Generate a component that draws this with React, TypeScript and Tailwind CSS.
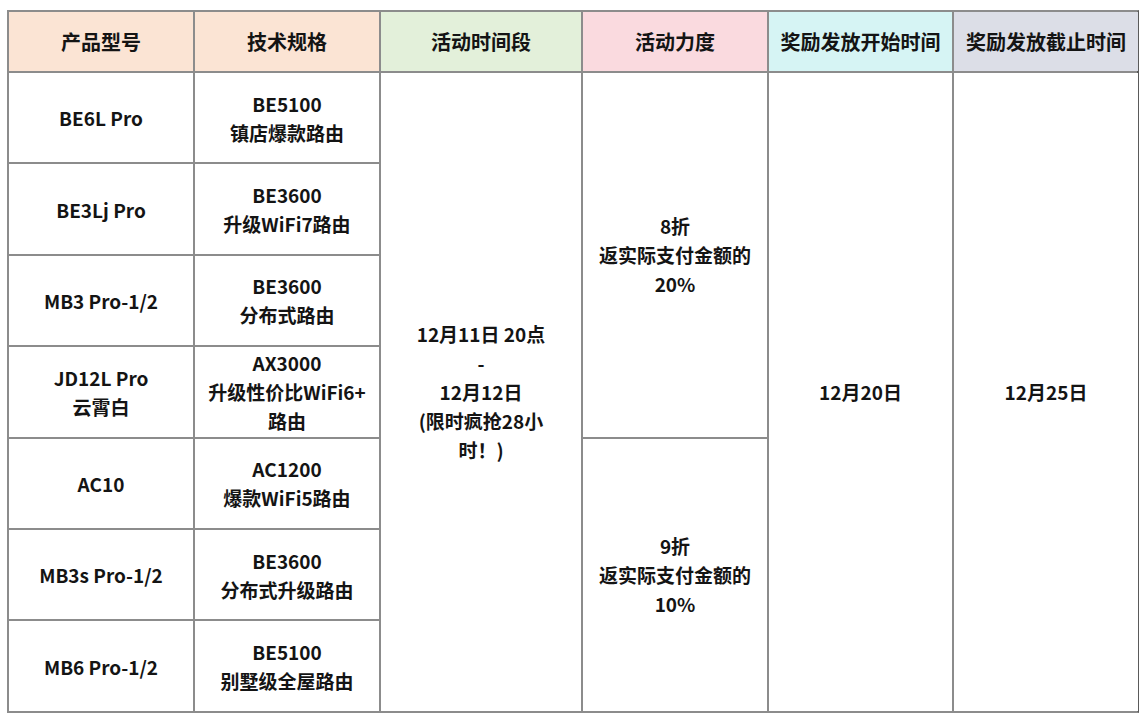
import React from 'react';

type Product = {
    model: string[];
    spec: string[];
};

const products: Product[] = [
    { model: ['BE6L Pro'], spec: ['BE5100', '镇店爆款路由'] },
    { model: ['BE3Lj Pro'], spec: ['BE3600', '升级WiFi7路由'] },
    { model: ['MB3 Pro-1/2'], spec: ['BE3600', '分布式路由'] },
    { model: ['JD12L Pro', '云霄白'], spec: ['AX3000', '升级性价比WiFi6+', '路由'] },
    { model: ['AC10'], spec: ['AC1200', '爆款WiFi5路由'] },
    { model: ['MB3s Pro-1/2'], spec: ['BE3600', '分布式升级路由'] },
    { model: ['MB6 Pro-1/2'], spec: ['BE5100', '别墅级全屋路由'] },
];

const headers = [
    { label: '产品型号', bg: 'bg-[#fbe4d4]' },
    { label: '技术规格', bg: 'bg-[#fbe4d4]' },
    { label: '活动时间段', bg: 'bg-[#e3f0da]' },
    { label: '活动力度', bg: 'bg-[#fadadf]' },
    { label: '奖励发放开始时间', bg: 'bg-[#d6f4f4]' },
    { label: '奖励发放截止时间', bg: 'bg-[#dcdee7]' },
];

const Lines = ({ lines }: { lines: string[] }) => (
    <>
        {lines.map((line, i) => (
            <span key={i} className="block">{line}</span>
        ))}
    </>
);

export default function App() {
    return (
        <div
            className="min-h-[722px] bg-white pl-[7px] pt-[10px] text-[#141414]"
            style={{ fontFamily: '"Noto Sans CJK SC", "Noto Sans", sans-serif' }}
        >
            <div className="grid w-[1132px] grid-cols-[184px_184px_200px_184px_183px_184px] grid-rows-[59px_repeat(7,89.4px)] gap-[2px] border-2 border-[#8c8c8c] border-r-[#5a5a5a] bg-[#8c8c8c] font-bold leading-[29px]">
                {headers.map((h) => (
                    <div
                        key={h.label}
                        className={`flex items-center justify-center whitespace-nowrap text-[20px] ${h.bg}`}
                    >
                        {h.label}
                    </div>
                ))}
                {products.map((p, i) => (
                    <React.Fragment key={p.spec.join() + i}>
                        <div
                            className="flex flex-col items-center justify-center bg-white text-center text-[19px]"
                            style={{ gridColumn: 1, gridRow: i + 2 }}
                        >
                            <Lines lines={p.model} />
                        </div>
                        <div
                            className="flex flex-col items-center justify-center bg-white text-center text-[19px]"
                            style={{ gridColumn: 2, gridRow: i + 2 }}
                        >
                            <Lines lines={p.spec} />
                        </div>
                    </React.Fragment>
                ))}
                <div className="col-start-3 row-start-2 row-end-9 flex flex-col items-center justify-center bg-white text-center text-[19px]">
                    <Lines lines={['12月11日 20点', '-', '12月12日', '(限时疯抢28小', '时！)']} />
                </div>
                <div className="col-start-4 row-start-2 row-end-6 flex flex-col items-center justify-center bg-white text-center text-[19px]">
                    <Lines lines={['8折', '返实际支付金额的', '20%']} />
                </div>
                <div className="col-start-4 row-start-6 row-end-9 flex flex-col items-center justify-center bg-white text-center text-[19px]">
                    <Lines lines={['9折', '返实际支付金额的', '10%']} />
                </div>
                <div className="col-start-5 row-start-2 row-end-9 flex items-center justify-center bg-white text-[19px]">
                    12月20日
                </div>
                <div className="col-start-6 row-start-2 row-end-9 flex items-center justify-center bg-white text-[19px]">
                    12月25日
                </div>
            </div>
        </div>
    );
}
